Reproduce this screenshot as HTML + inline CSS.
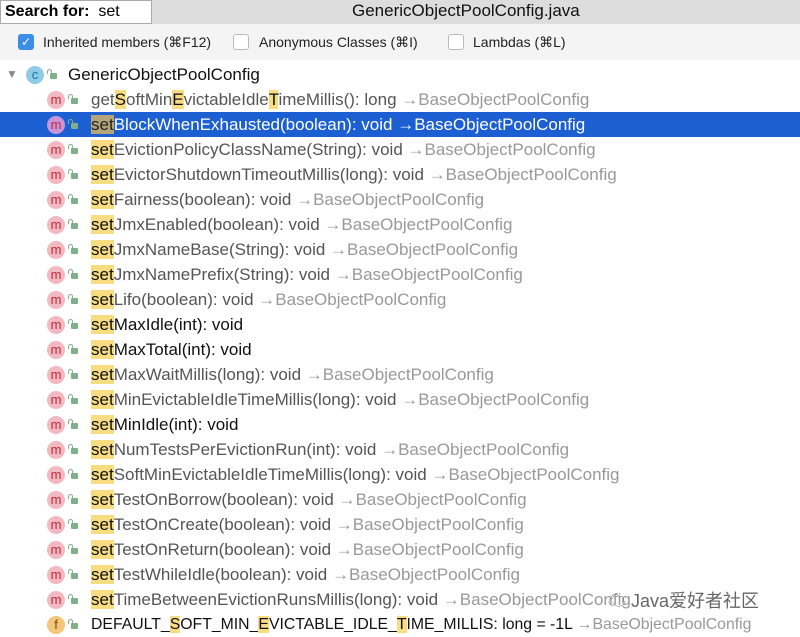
<!DOCTYPE html><html><head><meta charset="utf-8"><style>
body{margin:0;width:800px;height:637px;overflow:hidden;background:#fff;font-family:"Liberation Sans",sans-serif;position:relative}
.top{position:absolute;left:0;top:0;width:800px;height:24px;background:#dedddd}
.search{position:absolute;left:0;top:0;width:150px;height:22px;background:#fff;border:1px solid #aaa;font-size:16px;line-height:22px}
.title{position:absolute;left:352px;top:0;font-size:17px;line-height:22px;color:#111}
.opts{position:absolute;left:0;top:24px;width:800px;height:36px;background:#f5f4f5;font-size:14px;color:#222}
.cb{position:absolute;top:10px;width:16px;height:16px;border-radius:3px;background:#fff;border:1px solid #bbb;box-sizing:border-box}
.lbl{position:absolute;top:10px;line-height:16px}
.row{position:absolute;left:0;width:800px;height:25px;font-size:17px;line-height:25px;white-space:nowrap}
.ic{position:absolute;left:47px;top:4px;width:18px;height:18px;border-radius:50%;background:#f3b9c2;color:#c02a3a;font-size:13px;line-height:17px;text-align:center}
.lk{position:absolute;left:71px;top:11px;width:7px;height:6px;background:#7fb08a;border-radius:1px}
.lk:before{content:"";position:absolute;left:-3px;top:-4px;width:3px;height:4px;border:1.5px solid #7fb08a;border-bottom:none;border-radius:3px 3px 0 0}
.t{position:absolute;left:91px;color:#555}
.own{color:#111}
.h{background:#f7dc82;color:#111}
.a{color:#999}
.sel{background:#1b5fd2}
.sel .t{color:#fff}.sel .a{color:#fff}.sel .h{background:#b5a67a;color:#222}
</style></head><body>
<div class="top"></div>
<div class="search"><b style="margin-left:4px">Search for:</b>&nbsp; set</div>
<div class="title">GenericObjectPoolConfig.java</div>
<div class="opts">
<div class="cb" style="left:18px;background:#3b8ee8;border-color:#3b8ee8;color:#fff;font-size:12px;line-height:15px;text-align:center">✓</div>
<div class="lbl" style="left:43px">Inherited members (⌘F12)</div>
<div class="cb" style="left:233px"></div><div class="lbl" style="left:259px">Anonymous Classes (⌘I)</div>
<div class="cb" style="left:448px"></div><div class="lbl" style="left:473px">Lambdas (⌘L)</div>
</div>
<div class="row" style="top:62px"><span style="position:absolute;left:6px;color:#888;font-size:12px">▼</span><div class="ic" style="left:26px;background:#8fcbe8;color:#1a6fa0">c</div><div class="lk" style="left:50px"></div><span class="t own" style="left:68px">GenericObjectPoolConfig</span></div>
<div class="row" style="top:87px"><div class="ic">m</div><div class="lk"></div><span class="t">get<span class="h">S</span>oftMin<span class="h">E</span>victableIdle<span class="h">T</span>imeMillis(): long <span class="a">→BaseObjectPoolConfig</span></span></div>
<div class="row sel" style="top:112px"><div class="ic" style="background:#c896d8">m</div><div class="lk"></div><span class="t"><span class="h">set</span>BlockWhenExhausted(boolean): void <span class="a">→BaseObjectPoolConfig</span></span></div>
<div class="row" style="top:137px"><div class="ic">m</div><div class="lk"></div><span class="t"><span class="h">set</span>EvictionPolicyClassName(String): void <span class="a">→BaseObjectPoolConfig</span></span></div>
<div class="row" style="top:162px"><div class="ic">m</div><div class="lk"></div><span class="t"><span class="h">set</span>EvictorShutdownTimeoutMillis(long): void <span class="a">→BaseObjectPoolConfig</span></span></div>
<div class="row" style="top:187px"><div class="ic">m</div><div class="lk"></div><span class="t"><span class="h">set</span>Fairness(boolean): void <span class="a">→BaseObjectPoolConfig</span></span></div>
<div class="row" style="top:212px"><div class="ic">m</div><div class="lk"></div><span class="t"><span class="h">set</span>JmxEnabled(boolean): void <span class="a">→BaseObjectPoolConfig</span></span></div>
<div class="row" style="top:237px"><div class="ic">m</div><div class="lk"></div><span class="t"><span class="h">set</span>JmxNameBase(String): void <span class="a">→BaseObjectPoolConfig</span></span></div>
<div class="row" style="top:262px"><div class="ic">m</div><div class="lk"></div><span class="t"><span class="h">set</span>JmxNamePrefix(String): void <span class="a">→BaseObjectPoolConfig</span></span></div>
<div class="row" style="top:287px"><div class="ic">m</div><div class="lk"></div><span class="t"><span class="h">set</span>Lifo(boolean): void <span class="a">→BaseObjectPoolConfig</span></span></div>
<div class="row" style="top:312px"><div class="ic">m</div><div class="lk"></div><span class="t own"><span class="h">set</span>MaxIdle(int): void</span></div>
<div class="row" style="top:337px"><div class="ic">m</div><div class="lk"></div><span class="t own"><span class="h">set</span>MaxTotal(int): void</span></div>
<div class="row" style="top:362px"><div class="ic">m</div><div class="lk"></div><span class="t"><span class="h">set</span>MaxWaitMillis(long): void <span class="a">→BaseObjectPoolConfig</span></span></div>
<div class="row" style="top:387px"><div class="ic">m</div><div class="lk"></div><span class="t"><span class="h">set</span>MinEvictableIdleTimeMillis(long): void <span class="a">→BaseObjectPoolConfig</span></span></div>
<div class="row" style="top:412px"><div class="ic">m</div><div class="lk"></div><span class="t own"><span class="h">set</span>MinIdle(int): void</span></div>
<div class="row" style="top:437px"><div class="ic">m</div><div class="lk"></div><span class="t"><span class="h">set</span>NumTestsPerEvictionRun(int): void <span class="a">→BaseObjectPoolConfig</span></span></div>
<div class="row" style="top:462px"><div class="ic">m</div><div class="lk"></div><span class="t"><span class="h">set</span>SoftMinEvictableIdleTimeMillis(long): void <span class="a">→BaseObjectPoolConfig</span></span></div>
<div class="row" style="top:487px"><div class="ic">m</div><div class="lk"></div><span class="t"><span class="h">set</span>TestOnBorrow(boolean): void <span class="a">→BaseObjectPoolConfig</span></span></div>
<div class="row" style="top:512px"><div class="ic">m</div><div class="lk"></div><span class="t"><span class="h">set</span>TestOnCreate(boolean): void <span class="a">→BaseObjectPoolConfig</span></span></div>
<div class="row" style="top:537px"><div class="ic">m</div><div class="lk"></div><span class="t"><span class="h">set</span>TestOnReturn(boolean): void <span class="a">→BaseObjectPoolConfig</span></span></div>
<div class="row" style="top:562px"><div class="ic">m</div><div class="lk"></div><span class="t"><span class="h">set</span>TestWhileIdle(boolean): void <span class="a">→BaseObjectPoolConfig</span></span></div>
<div class="row" style="top:587px"><div class="ic">m</div><div class="lk"></div><span class="t"><span class="h">set</span>TimeBetweenEvictionRunsMillis(long): void <span class="a">→BaseObjectPoolConfig</span></span></div>
<div class="row" style="top:612px;font-size:15.8px"><div class="ic" style="background:#f3c67a;color:#7a4a10">f</div><div class="lk"></div><span class="t own">DEFAULT_<span class="h">S</span>OFT_MIN_<span class="h">E</span>VICTABLE_IDLE_<span class="h">T</span>IME_MILLIS: long = -1L <span class="a">→BaseObjectPoolConfig</span></span></div>
<div style="position:absolute;left:608px;top:588px;font-size:18px;line-height:26px;color:#666;font-family:'Liberation Sans','Noto Sans CJK SC',sans-serif;text-shadow:0 0 2px #fff">☁ Java爱好者社区</div>
</body></html>
